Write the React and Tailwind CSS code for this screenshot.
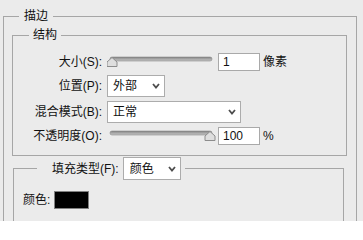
import React from "react";

// Photoshop "描边" layer style panel

function Chevron() {
  return (
    <svg width="8" height="6" viewBox="0 0 8 6" className="shrink-0">
      <polyline points="1,1 4,4.5 7,1" fill="none" stroke="#4d4d4d" strokeWidth="1.8" />
    </svg>
  );
}

function Select({ value, width }) {
  return (
    <div
      className={`${width} h-[22px] flex items-center justify-between bg-white border border-[#acacac] pl-[5px] pr-[4px]`}
    >
      <span className="leading-[14px]">{value}</span>
      <Chevron />
    </div>
  );
}

function Slider({ pos }) {
  // pos = thumb centre in px from svg left
  const t = pos;
  return (
    <svg width="112" height="18" viewBox="0 0 112 18" className="shrink-0">
      <defs>
        <linearGradient id="trk" x1="0" y1="0" x2="0" y2="1">
          <stop offset="0" stopColor="#7d7d7d" />
          <stop offset="0.5" stopColor="#a8a8a8" />
          <stop offset="1" stopColor="#c4c4c4" />
        </linearGradient>
      </defs>
      <rect x="3" y="4" width="102" height="4" rx="2" fill="url(#trk)" stroke="#8a8a8a" strokeWidth="0.6" />
      <polygon
        points={`${t},4.5 ${t + 5},9 ${t + 5},13.5 ${t - 5},13.5 ${t - 5},9`}
        fill="#dedede"
        stroke="#8c8c8c"
        strokeWidth="1"
      />
    </svg>
  );
}

function ValueBox({ value }) {
  return (
    <input
      readOnly
      value={value}
      className="w-[42px] h-[18px] bg-white border border-[#a9a9a9] pl-[4px] text-[12px] leading-[16px] outline-none"
    />
  );
}

function Row({ label, children }) {
  return (
    <div className="flex items-center">
      <div className="w-[89px] text-right whitespace-nowrap leading-[14px]">{label}</div>
      <div className="ml-[5px] flex items-center">{children}</div>
    </div>
  );
}

export default function App() {
  return (
    <div className="w-[363px] h-[221px] overflow-hidden bg-[#ebebeb] text-[12px] text-[#111] font-['Liberation_Sans','Noto_Sans_CJK_SC',sans-serif]">
      <fieldset className="ml-[3px] mt-[9px] w-[354px] h-[260px] border border-[#a6a6a6]">
        <legend className="ml-[15px] px-[5px] leading-[14px] mb-[4px]">描边</legend>

        <fieldset className="ml-[8px] mt-[1px] w-[335px] border border-[#a6a6a6] pt-[7px] pb-[10px]">
          <legend className="ml-[16px] px-[4px] leading-[14px] mb-[4px]">结构</legend>
          <div className="flex flex-col gap-[4px]">
            <Row label="大小(S):">
              <Slider pos={5} />
              <div className="ml-[-1px]">
                <ValueBox value="1" />
              </div>
              <span className="ml-[3px] leading-[14px]">像素</span>
            </Row>
            <Row label="位置(P):">
              <Select value="外部" width="w-[58px]" />
            </Row>
            <Row label="混合模式(B):">
              <Select value="正常" width="w-[134px]" />
            </Row>
            <Row label="不透明度(O):">
              <Slider pos={103} />
              <div className="ml-[-1px]">
                <ValueBox value="100" />
              </div>
              <span className="ml-[3px] leading-[14px]">%</span>
            </Row>
          </div>
        </fieldset>

        <fieldset className="ml-[9px] mt-[1px] w-[331px] border border-[#a6a6a6] pl-[9px] pt-[11px] pb-[30px]">
          <legend className="ml-[14px] pl-[15px] pr-[4px] mt-[6px] flex items-center gap-[4px]">
            <span className="leading-[14px]">填充类型(F):</span>
            <div className="w-[58px] h-[23px] flex items-center justify-between bg-white border border-[#acacac] pl-[6px] pr-[4px]">
              <span className="leading-[14px]">颜色</span>
              <Chevron />
            </div>
          </legend>
          <div className="flex items-center">
            <span className="leading-[14px]">颜色:</span>
            <div className="ml-[4px] w-[35px] h-[18px] bg-black border border-[#808080]" />
          </div>
        </fieldset>
      </fieldset>
    </div>
  );
}
